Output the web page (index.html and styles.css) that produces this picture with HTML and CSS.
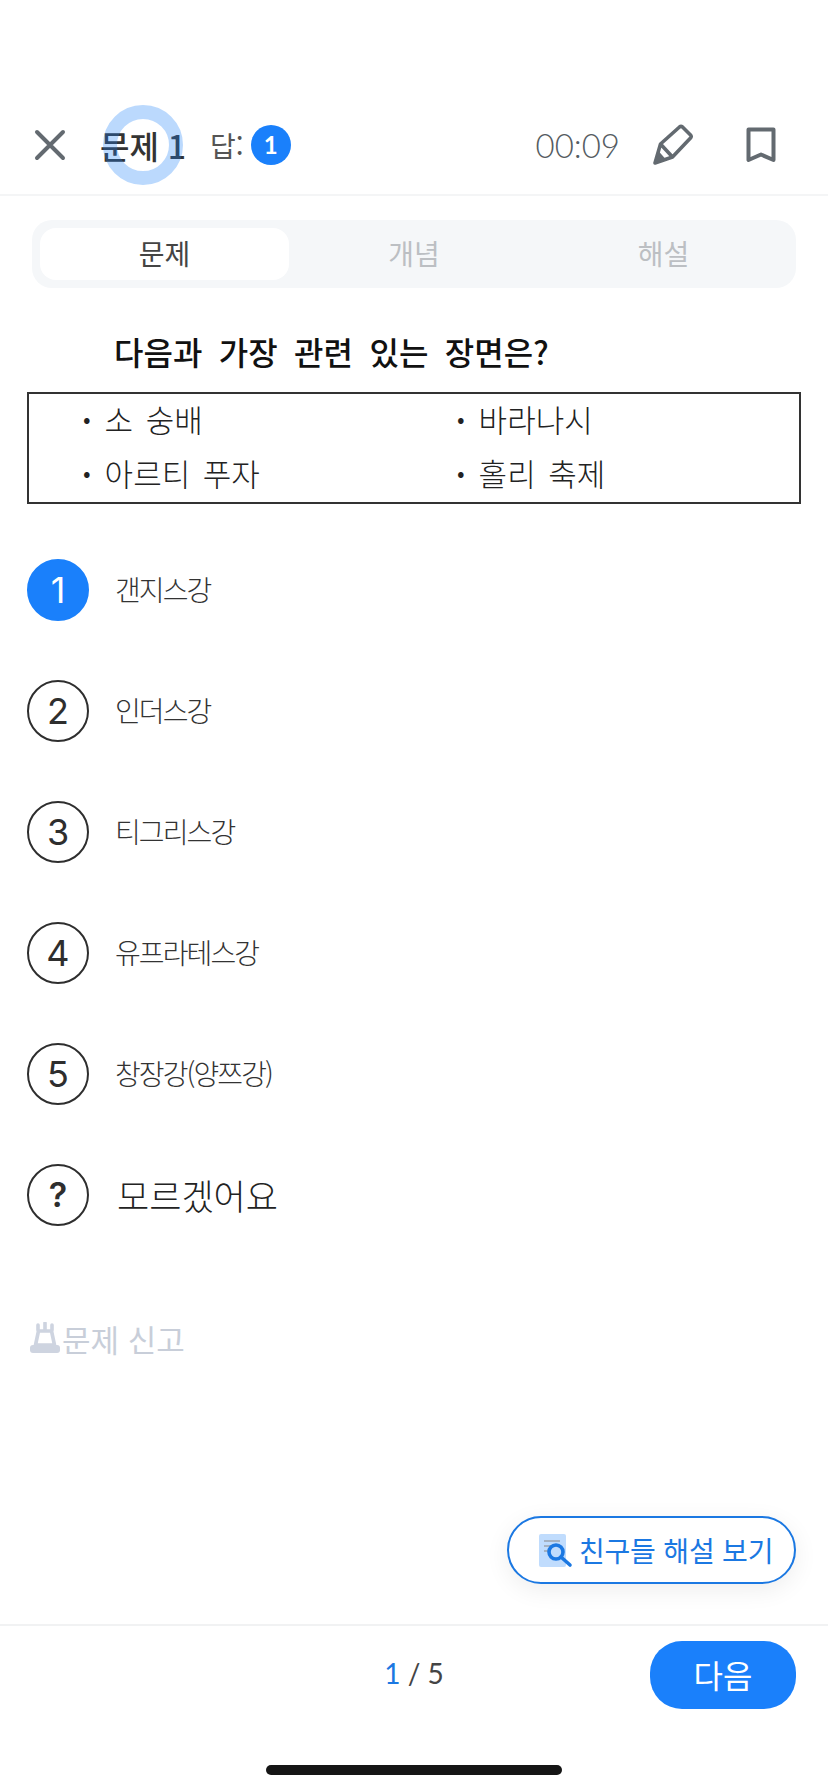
FILE: index.html
```html
<!DOCTYPE html>
<html lang="ko">
<head>
  <meta charset="UTF-8">
  <title>문제 1</title>
  <meta name="viewport" content="width=device-width, initial-scale=1.0">
  <link rel="stylesheet" href="styles.css">
</head>
<body>
<div class="screen">

  <!-- 상단 -->
  <div class="header">
    <svg class="icon-close" width="32" height="32" viewBox="0 0 32 32">
      <path d="M3 3 L29 29 M29 3 L3 29" fill="none" stroke="#636a70" stroke-width="4" stroke-linecap="round"/>
    </svg>
    <div class="title">문제 1</div>
    <div class="answer">답:</div>
    <div class="answer-badge">1</div>
    <div class="timer">00:09</div>
    <svg class="icon-pencil" width="42" height="42" viewBox="0 0 42 42">
      <path d="M4 39 L9.5 20 L28.5 3 Q30 1.8 31.5 3 L39.5 11 Q40.8 12.5 39.5 14 L21.5 33 Z M9.5 20 L21.5 33" fill="none" stroke="#636a70" stroke-width="3.6" stroke-linejoin="round"/>
      <path d="M4 39 L7.5 27 L14.5 35 Z" fill="#636a70"/>
    </svg>
    <svg class="icon-bookmark" width="30" height="36" viewBox="0 0 30 36">
      <path d="M2.5 2.5 H27.5 V33 L15 27.5 L2.5 33 Z" fill="none" stroke="#636a70" stroke-width="4" stroke-linejoin="round"/>
    </svg>
    <div class="touch-ring"></div>
  </div>

  <!-- 탭 -->
  <div class="tabs">
    <div class="tab active">문제</div>
    <div class="tab">개념</div>
    <div class="tab">해설</div>
  </div>

  <!-- 문제 -->
  <div class="question">다음과 가장 관련 있는 장면은?</div>
  <div class="question-box">
    <div class="box-item">소 숭배</div>
    <div class="box-item">바라나시</div>
    <div class="box-item">아르티 푸자</div>
    <div class="box-item">홀리 축제</div>
  </div>

  <!-- 보기 -->
  <div class="options">
    <div class="option">
      <div class="circle selected">1</div>
      <div class="option-text">갠지스강</div>
    </div>
    <div class="option">
      <div class="circle">2</div>
      <div class="option-text">인더스강</div>
    </div>
    <div class="option">
      <div class="circle">3</div>
      <div class="option-text">티그리스강</div>
    </div>
    <div class="option">
      <div class="circle">4</div>
      <div class="option-text">유프라테스강</div>
    </div>
    <div class="option">
      <div class="circle">5</div>
      <div class="option-text">창장강(양쯔강)</div>
    </div>
    <div class="option">
      <div class="circle unknown">?</div>
      <div class="option-text big">모르겠어요</div>
    </div>
  </div>

  <div class="report">
    <svg width="32" height="32" viewBox="0 0 32 32">
      <path d="M9 8 V3 M16 8 V1 M23 8 V3" stroke="#ced4e0" stroke-width="3.6" stroke-linecap="round" fill="none"/>
      <path d="M9.5 9 H22.5 L25.5 23 H6.5 Z" fill="none" stroke="#ced4e0" stroke-width="3.6" stroke-linejoin="round"/>
      <rect x="1" y="23" width="30" height="8" rx="3" fill="#ced4e0"/>
    </svg>
    <span>문제 신고</span>
  </div>

  <div class="fab-row">
    <div class="fab">
      <svg width="34" height="36" viewBox="0 0 34 36">
        <rect x="0" y="2" width="27" height="33" rx="2" fill="#c0dcfd"/>
        <path d="M5 9 H21 M5 14 H14 M5 19 H11" stroke="#9aa3ad" stroke-width="1.6" fill="none"/>
        <circle cx="17" cy="20" r="7" fill="#c0dcfd" stroke="#1b78e2" stroke-width="3.6"/>
        <path d="M22 25 L31 33" stroke="#1b78e2" stroke-width="3.6" stroke-linecap="round"/>
      </svg>
      <span>친구들 해설 보기</span>
    </div>
  </div>

  <!-- 하단 -->
  <div class="footer">
    <div class="pager"><span class="pager-now">1</span> / 5</div>
    <div class="next">다음</div>
  </div>
  <div class="home-wrap"><div class="home-bar"></div></div>
</div>
</body>
</html>
```

FILE: styles.css
```css
* { box-sizing: border-box; }
body {
  font-family: 'Noto Sans CJK KR', 'Noto Sans', sans-serif;
  background-color: #fff;
  margin: 0;
  padding: 0;
  color: #333;
}
.screen {
  width: 828px;
  height: 1792px;
  overflow: hidden;
}
.header {
  position: relative;
  height: 196px;
  padding: 96px 36px 0 34px;
  display: flex;
  align-items: center;
  border-bottom: 2px solid #f4f5f6;
}
.icon-close { flex: none; }
.title {
  margin-left: 34px;
  font-size: 32px;
  font-weight: 500;
  color: #333;
  white-space: nowrap;
}
.answer {
  margin-left: 24px;
  font-size: 28px;
  color: #555;
}
.answer-badge {
  margin-left: 7px;
  width: 40px;
  height: 40px;
  border-radius: 50%;
  background-color: #1a80fb;
  color: #fff;
  font-family: 'Lato', sans-serif;
  font-weight: 700;
  font-size: 24px;
  text-align: center;
  line-height: 40px;
}
.timer {
  margin-left: auto;
  font-family: 'Lato', sans-serif;
  font-weight: 300;
  font-size: 33px;
  color: #555c62;
}
.icon-pencil { margin-left: 31px; }
.icon-bookmark { margin-left: 53px; margin-right: 16px; }
.touch-ring {
  position: absolute;
  left: 103px;
  top: 105px;
  width: 80px;
  height: 80px;
  border: 14px solid rgba(30, 130, 250, 0.3);
  border-radius: 50%;
}
.tabs {
  margin: 24px 32px 0;
  height: 68px;
  padding: 8px;
  background-color: #f5f7f9;
  border-radius: 20px;
  display: grid;
  grid-template-columns: 249px 1fr 249px;
}
.tab {
  font-size: 28px;
  line-height: 50px;
  text-align: center;
  color: #bcbfc3;
}
.tab.active {
  background-color: #fff;
  border-radius: 16px;
  color: #444;
}
.question {
  margin: 38px 0 0 114px;
  font-size: 32px;
  line-height: 50px;
  font-weight: 500;
  color: #111;
  word-spacing: 7.5px;
  white-space: nowrap;
}
.question-box {
  margin: 16px 27px 0;
  height: 112px;
  padding: 0 0 0 54px;
  border: 2px solid #333;
  display: grid;
  grid-template-columns: 374px 1fr;
  grid-template-rows: 48px 60px;
}
.box-item {
  font-size: 31px;
  font-weight: 300;
  line-height: 48px;
  color: #222;
  word-spacing: 4px;
}
.box-item:nth-child(n+3) { padding-top: 6px; }
.box-item::before {
  content: "•";
  font-size: 24px;
  margin-right: 14px;
  vertical-align: 4px;
}
.options {
  margin-top: 55px;
  padding-left: 27px;
  display: flex;
  flex-direction: column;
  gap: 59px;
}
.option {
  display: flex;
  align-items: center;
  height: 62px;
}
.circle {
  flex: none;
  width: 62px;
  height: 62px;
  border: 2px solid #2e2e2e;
  border-radius: 50%;
  font-family: 'Inter', sans-serif;
  font-size: 36px;
  color: #2e2e2e;
  text-align: center;
  line-height: 58px;
}
.circle.selected {
  background-color: #1a80fb;
  border-color: #1a80fb;
  color: #fff;
}
.circle.unknown {
  font-weight: 600;
  font-size: 34px;
}
.option-text {
  margin: -2px 0 0 26px;
  font-size: 28px;
  font-weight: 300;
  letter-spacing: -1.9px;
  color: #333;
}
.option-text.big {
  font-size: 35px;
  letter-spacing: 0;
  margin: -2px 0 0 28px;
  color: #222;
}
.report {
  margin: 92px 0 0 29px;
  display: flex;
  align-items: center;
  gap: 1px;
  height: 40px;
  font-size: 31px;
  color: #c8ced9;
}
.fab-row {
  margin-top: 158px;
  padding-right: 32px;
  display: flex;
  justify-content: flex-end;
}
.fab {
  width: 289px;
  height: 68px;
  padding-left: 30px;
  display: flex;
  align-items: center;
  gap: 6px;
  background-color: #fff;
  border: 2px solid #1b78e2;
  border-radius: 34px;
  box-shadow: 0 6px 24px rgba(0, 0, 0, 0.07);
  font-size: 28px;
  letter-spacing: -0.2px;
  color: #1b78e2;
  white-space: nowrap;
}
.footer {
  position: relative;
  margin-top: 40px;
  height: 101px;
  border-top: 2px solid #f1f2f3;
  padding: 15px 32px 0 0;
  display: flex;
  justify-content: flex-end;
  align-items: flex-start;
}
.pager {
  position: absolute;
  left: 0;
  right: 0;
  top: 30px;
  text-align: center;
  font-family: 'Lato', sans-serif;
  font-size: 28px;
  color: #444;
}
.pager-now { color: #1b78e2; }
.next {
  width: 146px;
  height: 68px;
  background-color: #1a80fb;
  border-radius: 32px;
  color: #fff;
  font-size: 32px;
  text-align: center;
  line-height: 66px;
}
.home-wrap {
  margin-top: 40px;
  display: flex;
  justify-content: center;
}
.home-bar {
  width: 296px;
  height: 10px;
  border-radius: 5px;
  background-color: #151515;
}
```
